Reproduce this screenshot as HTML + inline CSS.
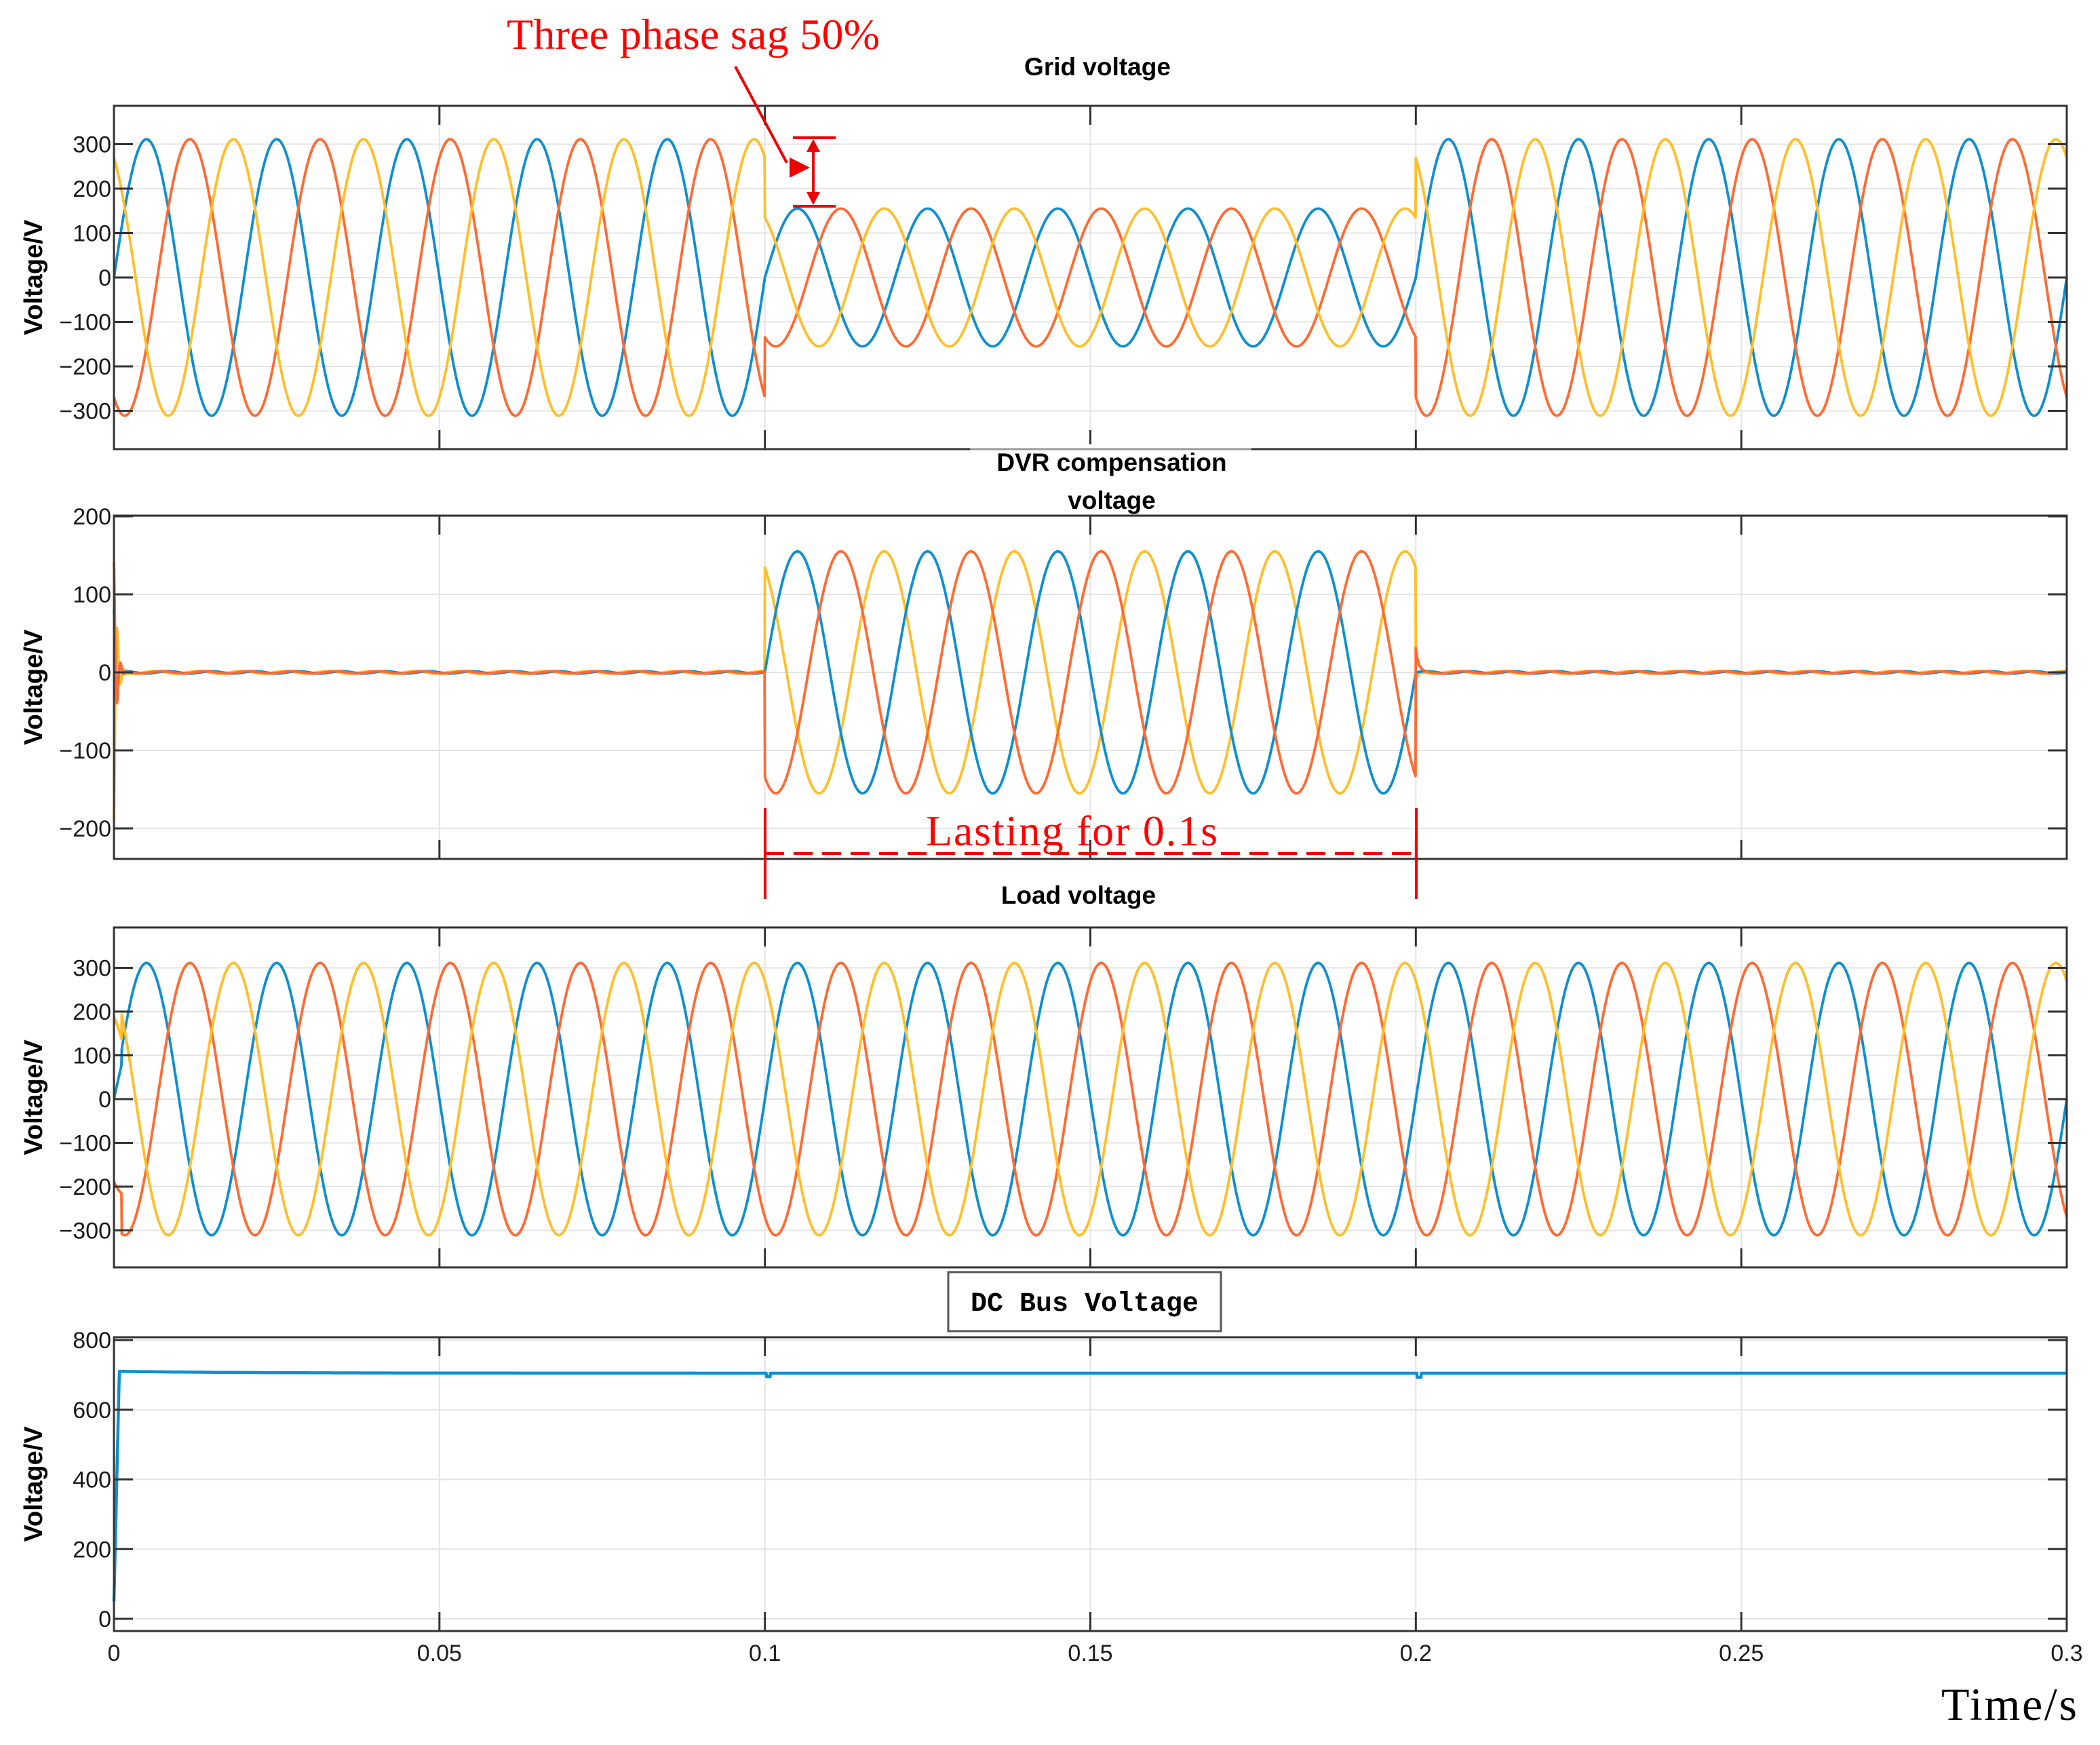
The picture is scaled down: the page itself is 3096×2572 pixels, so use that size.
<!DOCTYPE html>
<html><head><meta charset="utf-8"><style>
html,body{margin:0;padding:0;background:#fff;}
svg{display:block}
</style></head><body>
<svg id="s" width="3096" height="2572" viewBox="0 0 3096 2572" xmlns="http://www.w3.org/2000/svg">
<rect width="3096" height="2572" fill="#fff"/>
<g id="g"></g>
</svg>
<script>
const NS="http://www.w3.org/2000/svg";
const g=document.getElementById('g');
function el(t,a,txt){const e=document.createElementNS(NS,t);for(const k in a)e.setAttribute(k,a[k]);if(txt!==undefined)e.textContent=txt;g.appendChild(e);return e;}
const X0=168,X1=3047;
const xs=t=>X0+(X1-X0)*t/0.3;
const B="#0E8FCF",O="#FF6A33",Y="#FFBE2A";
function axes(top,bot,ticks,ymap){
  for(let i=1;i<6;i++){const x=xs(i*0.05);el('line',{x1:x,y1:top,x2:x,y2:bot,stroke:'#e4e4e4','stroke-width':2});}
  ticks.forEach(v=>{const y=ymap(v);el('line',{x1:X0,y1:y,x2:X1,y2:y,stroke:'#e4e4e4','stroke-width':2});});
}
function frame(top,bot,ticks,ymap){
  el('rect',{x:X0,y:top,width:X1-X0,height:bot-top,fill:'none',stroke:'#333','stroke-width':3});
  for(let i=1;i<6;i++){const x=xs(i*0.05);el('line',{x1:x,y1:top,x2:x,y2:top+28,stroke:'#333','stroke-width':3});el('line',{x1:x,y1:bot,x2:x,y2:bot-28,stroke:'#333','stroke-width':3});}
  ticks.forEach(v=>{const y=ymap(v);el('line',{x1:X0,y1:y,x2:X0+28,y2:y,stroke:'#333','stroke-width':3});el('line',{x1:X1,y1:y,x2:X1-28,y2:y,stroke:'#333','stroke-width':3});
    el('text',{x:X0-4,y:y+12,'text-anchor':'end','font-family':'Liberation Sans, sans-serif','font-size':34,fill:'#1a1a1a'},v==0?'0':String(v).replace('-','\u2212'));});
  const cy=(top+bot)/2;
  el('text',{x:0,y:0,transform:`translate(62,${cy}) rotate(-90)`,'text-anchor':'middle','font-family':'Liberation Sans, sans-serif','font-weight':'bold','font-size':38,fill:'#000'},'Voltage/V');
}
function path(fn,ymap,color,w){
  let d='';const N=6000;
  for(let i=0;i<=N;i++){const t=0.3*i/N;const v=fn(t);d+=(i?'L':'M')+xs(t).toFixed(1)+' '+ymap(v).toFixed(1);}
  el('path',{d:d,fill:'none',stroke:color,'stroke-width':w||3.8,'stroke-linejoin':'round'});
}
const w=2*Math.PI*50;
const ph=[0,-2*Math.PI/3,2*Math.PI/3];
const y1=v=>409-v*0.655;
const t1=[300,200,100,0,-100,-200,-300];
axes(156,662,t1,y1);
[[B,0],[O,1],[Y,2]].forEach(([c,k])=>path(t=>{const a=(t>=0.1&&t<0.2)?155:311;return a*Math.sin(w*t+ph[k]);},y1,c));
frame(156,662,t1,y1);
const y2=v=>991-v*1.15;
const t2=[200,100,0,-100,-200];
axes(760,1266,t2,y2);
[[Y,2],[B,0],[O,1]].forEach(([c,k])=>path(t=>{
  if(t>=0.1&&t<0.2)return 155*Math.sin(w*t+ph[k]);
  let v=1.5*Math.sin(w*t*3+k);
  if(t<0.0025){const s=[80,140,-190][k];v+=s*Math.exp(-t/0.0004)*Math.cos(t*6000);}
  if(t>=0.2&&t<0.202){v+=[0,30,-10][k]*Math.exp(-(t-0.2)/0.0004);}
  return v;},y2,c));
frame(760,1266,t2,y2);
const y3=v=>1620-v*0.645;
axes(1367,1868,t1,y3);
[[B,0],[O,1],[Y,2]].forEach(([c,k])=>path(t=>{
  let v=311*Math.sin(w*t+ph[k]);
  if(t<0.0012)v*=0.7;
  return v;},y3,c));
frame(1367,1868,t1,y3);
const y4=v=>2386-v*0.5135;
const t4=[800,600,400,200,0];
axes(1971,2404,t4,y4);
path(t=>{if(t<0.0008)return 50+640*t/0.0008;let v=705+5*Math.exp(-(t-0.002)/0.02);if(Math.abs(t-0.1005)<0.0003)v-=10;if(Math.abs(t-0.2005)<0.0003)v-=12;return v;},y4,B,4.5);
frame(1971,2404,t4,y4);
['0','0.05','0.1','0.15','0.2','0.25','0.3'].forEach((s,i)=>el('text',{x:xs(i*0.05),y:2448,'text-anchor':'middle','font-family':'Liberation Sans, sans-serif','font-size':34,fill:'#1a1a1a'},s));
el('rect',{x:1440,y:655,width:400,height:100,fill:'#fff'});
el('line',{x1:1430,y1:662,x2:1845,y2:662,stroke:'#999','stroke-width':3});
const tt=(x,y,s)=>el('text',{x:x,y:y,'text-anchor':'middle','font-family':'Liberation Sans, sans-serif','font-weight':'bold','font-size':37,fill:'#000'},s);
tt(1618,111,'Grid voltage');
tt(1639,694,'DVR compensation');
tt(1639,750,'voltage');
tt(1590,1332,'Load voltage');
el('rect',{x:1398,y:1875,width:402,height:87,fill:'#fff',stroke:'#555','stroke-width':3});
el('text',{x:1599,y:1932,'text-anchor':'middle','font-family':'Liberation Mono, monospace','font-weight':'bold','font-size':40,fill:'#000'},'DC Bus Voltage');
el('text',{x:1022,y:72,'text-anchor':'middle','font-family':'Liberation Serif, serif','font-size':64,fill:'#f00',textLength:550},'Three phase sag 50%');
el('line',{x1:1084,y1:98,x2:1160,y2:240,stroke:'#e00','stroke-width':4});
el('path',{d:'M1194 247 L1164 232 L1164 262 Z',fill:'#e00'});
el('line',{x1:1165,y1:247,x2:1190,y2:247,stroke:'#e00','stroke-width':4});
el('line',{x1:1169,y1:203,x2:1232,y2:203,stroke:'#e00','stroke-width':4});
el('line',{x1:1169,y1:304,x2:1232,y2:304,stroke:'#e00','stroke-width':4});
el('line',{x1:1199,y1:210,x2:1199,y2:297,stroke:'#e00','stroke-width':4});
el('path',{d:'M1199 205 L1189 224 L1209 224 Z M1199 302 L1189 283 L1209 283 Z',fill:'#e00'});
el('line',{x1:1128,y1:1191,x2:1128,y2:1325,stroke:'#e00','stroke-width':4});
el('line',{x1:2088,y1:1191,x2:2088,y2:1325,stroke:'#e00','stroke-width':4});
el('line',{x1:1128,y1:1258,x2:2088,y2:1258,stroke:'#e00','stroke-width':4,'stroke-dasharray':'28 14'});
el('text',{x:1580,y:1246,'text-anchor':'middle','font-family':'Liberation Serif, serif','font-size':64,fill:'#f00',textLength:430},'Lasting for 0.1s');
el('text',{x:3062,y:2535,'text-anchor':'end','font-family':'Liberation Serif, serif','font-size':68,fill:'#000',textLength:200},'Time/s');
</script>
</body></html>
